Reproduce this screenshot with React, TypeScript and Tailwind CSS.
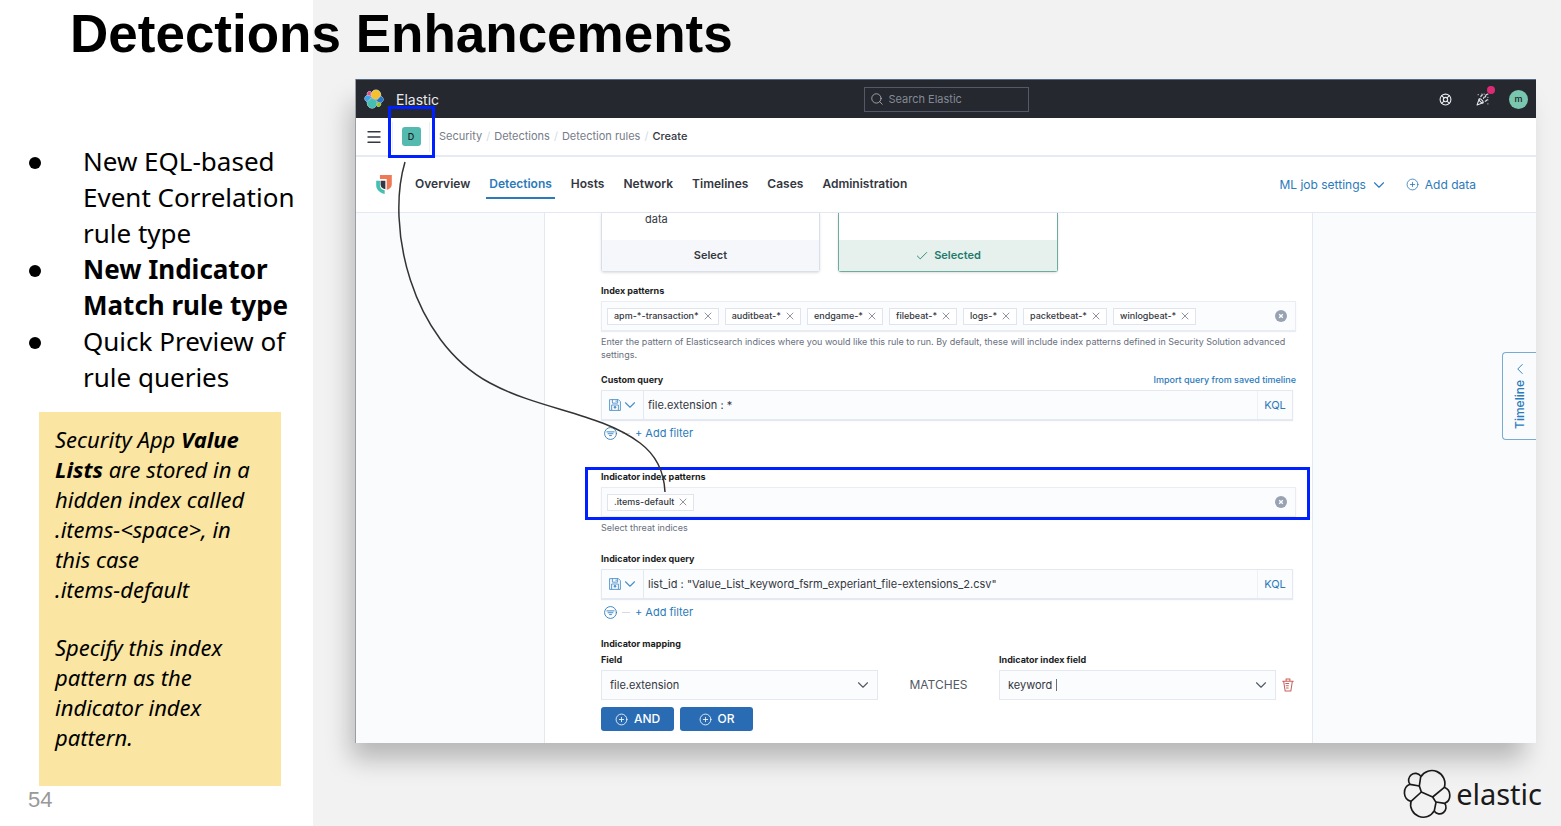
import type { ReactNode } from 'react';
import { Check, ChevronDown, ChevronLeft, CirclePlus, LifeBuoy, Menu, PartyPopper, Search, X } from 'lucide-react';

const indexPatterns = [
  'apm-*-transaction*',
  'auditbeat-*',
  'endgame-*',
  'filebeat-*',
  'logs-*',
  'packetbeat-*',
  'winlogbeat-*',
];

const navItems = ['Overview', 'Detections', 'Hosts', 'Network', 'Timelines', 'Cases', 'Administration'];

const clusterShapes = [
  { fill: '#F5C12E', d: 'M12.58 13.787l7.002 3.211 7.066-6.213a7.849 7.849 0 00.152-1.557c0-4.287-3.464-7.775-7.722-7.775a7.7 7.7 0 00-6.376 3.386l-1.18 6.121 1.058 2.827z' },
  { fill: '#46BFB3', d: 'M5.333 21.215a8.2 8.2 0 00-.15 1.59c0 4.3 3.487 7.812 7.757 7.812 2.57 0 4.975-1.28 6.425-3.42l1.166-6.107-1.556-2.989-7.03-3.22-6.612 6.334z' },
  { fill: '#E8478B', d: 'M5.288 9.067l4.8 1.137L11.14 4.72a3.79 3.79 0 00-6.072 3.025c0 .456.073.906.22 1.322z' },
  { fill: '#3CA5EC', d: 'M4.872 10.214c-2.144.713-3.64 2.78-3.64 5.06 0 2.218 1.36 4.201 3.41 4.99l6.734-6.121-1.236-2.661-5.268-1.268z' },
  { fill: '#93C90E', d: 'M20.873 27.197a3.756 3.756 0 006.07-3.03c0-.455-.073-.905-.22-1.32l-4.795-1.13-1.055 5.48z' },
  { fill: '#2178C9', d: 'M21.848 20.563l5.28 1.242c2.144-.713 3.64-2.78 3.64-5.06a5.378 5.378 0 00-3.41-4.984l-6.904 6.084 1.394 2.718z' },
];

function ElasticCluster() {
  return (
    <svg viewBox="0 0 32 32" className="h-5 w-5" aria-hidden="true">
      {clusterShapes.map((s) => (
        <path key={s.fill} d={s.d} fill="#dfe6ee" stroke="#dfe6ee" strokeWidth="1.2" />
      ))}
      {clusterShapes.map((s) => (
        <path key={s.fill} d={s.d} fill={s.fill} />
      ))}
    </svg>
  );
}

function ElasticOutline() {
  return (
    <svg viewBox="66 88 150 150" className="h-[50px] w-[50px]" fill="none" stroke="#1a1a1a" strokeWidth="5" strokeLinejoin="round" aria-hidden="true">
      <path d="M122 112A39 39 0 0 1 193 143L158 172L124 157L118 139Z" />
      <path d="M122 109A19 19 0 0 0 90 134L118 139" />
      <path d="M90 134A27 27 0 0 0 93 185L124 157" />
      <path d="M93 185A38 38 0 0 0 163 213L168 188L158 172" />
      <path d="M193 143A26 26 0 0 1 194 191L168 187" />
      <path d="M194 191A18 18 0 0 1 163 215" />
    </svg>
  );
}

function SecurityLogo() {
  return (
    <svg viewBox="0 0 46 56" className="h-[19px] w-4" aria-hidden="true">
      <path fill="#EE7A55" d="M11 0H46V27C46 35 41 41 31 44V12H11Z" />
      <path fill="#46BFB3" d="M0 17H11V30C11 38 15 42 25 45V56C10 52 0 43 0 31Z" />
      <path fill="#343741" d="M13 17H27V42C17 40 13 35 13 28Z" />
    </svg>
  );
}

function SaveIcon() {
  return (
    <svg viewBox="0 0 16 16" className="h-3 w-3" fill="none" stroke="currentColor" strokeWidth="1.2" aria-hidden="true">
      <path d="M1.5.8H12.5L15.2 3.5V15.2H.8V.8ZM4.5.8V5.5H11.5V.8M9.5 2V4M3.5 15V8H12.5V15" />
      <circle cx="8" cy="11" r="1.3" fill="currentColor" />
    </svg>
  );
}

function FilterIcon() {
  return (
    <svg viewBox="0 0 16 16" className="h-[13px] w-[13px]" fill="none" stroke="currentColor" strokeWidth="1.1" strokeLinecap="round" aria-hidden="true">
      <circle cx="8" cy="8" r="7.3" />
      <path d="M3.5 6H12.5M5 8.3H11M6.8 10.6H9.2" />
    </svg>
  );
}

function ClearIcon() {
  return (
    <svg viewBox="0 0 12 12" className="h-3 w-3" aria-hidden="true">
      <circle cx="6" cy="6" r="6" fill="#98A2B3" />
      <path d="M4.2 4.2L7.8 7.8M7.8 4.2L4.2 7.8" stroke="#fff" strokeWidth="1.3" />
    </svg>
  );
}

function TrashIcon() {
  return (
    <svg viewBox="0 0 16 18" className="h-[14px] w-3" fill="none" stroke="#C9605A" strokeWidth="1.4" strokeLinecap="round" aria-hidden="true">
      <path d="M1 4H15M5.5 4V1H10.5V4M2.2 4L4.2 17H11.8L13.8 4M5 7H9M5.5 10H8.5M6 13H8.2" />
    </svg>
  );
}

function ComboField({ id, label, items, children }: { id: string; label: string; items: string[]; children?: ReactNode }) {
  return (
    <div className="flex flex-col gap-1">
      <label htmlFor={id} className="text-[9px] leading-[13px] font-bold text-[#1a1c21]">{label}</label>
      <div className="flex h-[30px] items-center gap-[6px] border border-[#e9edf3] bg-[#fbfcfd] pr-2 pl-[5px] shadow-[0_1px_1px_#e9edf3]">
        {items.map((item) => (
          <span key={item} className="flex h-[17px] shrink-0 items-center gap-[3px] border border-[#dfe4ee] bg-white pr-1 pl-[6px] text-[9px] font-medium text-[#343741]">
            {item}
            <button type="button" aria-label={`Remove ${item}`}>
              <X className="h-3 w-3 text-[#69707d]" strokeWidth={1.5} />
            </button>
          </span>
        ))}
        <input id={id} className="min-w-0 flex-1 bg-transparent text-[9px] outline-none" />
        <button type="button" aria-label="Clear all">
          <ClearIcon />
        </button>
      </div>
      {children}
    </div>
  );
}

function QueryField({ id, label, value, action }: { id: string; label: string; value: string; action?: ReactNode }) {
  return (
    <div>
      <div className="flex items-center justify-between">
        <label htmlFor={id} className="text-[9px] leading-[13px] font-bold text-[#1a1c21]">{label}</label>
        {action}
      </div>
      <div className="mt-1 mr-[3px] flex h-[30px] border border-[#e4e8f1] bg-[#fbfcfd] shadow-[0_1px_1px_#e4e8f1]">
        <button type="button" aria-label="Saved queries" className="flex w-[42px] items-center justify-center border-r border-[#e4e8f1] pl-[2px] text-[#4a90c9]">
          <SaveIcon />
          <ChevronDown className="h-[18px] w-[18px]" strokeWidth={1.5} />
        </button>
        <input id={id} defaultValue={value} className="min-w-0 flex-1 bg-transparent px-1 text-[11px] text-[#343741] outline-none" />
        <button type="button" className="w-[35px] border-l border-[#edf0f5] text-[11px] text-[#2b7abb]">KQL</button>
      </div>
      <div className="flex h-[26px] items-center gap-[5px] pl-[3px] text-[#2b7abb]">
        <FilterIcon />
        <span className="h-px w-2 bg-[#d3dae6]" />
        <button type="button" className="text-[11px]">+ Add filter</button>
      </div>
    </div>
  );
}

function SelectField({ id, label, value, caret }: { id: string; label: string; value: string; caret?: boolean }) {
  return (
    <div className="flex flex-1 flex-col gap-1">
      <label htmlFor={id} className="text-[9px] leading-[13px] font-bold text-[#1a1c21]">{label}</label>
      <div className="flex h-[30px] items-center gap-1 border border-[#e4e8f1] bg-[#fbfcfd] pr-[5px] pl-2 text-[11px] text-[#343741]">
        <select id={id} className="appearance-none bg-transparent outline-none [field-sizing:content]">
          <option>{value}</option>
        </select>
        {caret && <span className="h-3 w-px bg-[#69707d]" />}
        <ChevronDown className="ml-auto h-[18px] w-[18px] text-[#535966]" strokeWidth={1.5} />
      </div>
    </div>
  );
}

function AppHeader() {
  return (
    <header>
      <div className="grid h-[39px] grid-cols-[1fr_auto_1fr] items-center border-t border-[#536a86] bg-[#25282f] px-2">
        <div className="flex items-center gap-3 text-[14px] text-[#e8eaee]">
          <ElasticCluster />
          Elastic
        </div>
        <label className="flex h-[25px] w-[165px] items-center gap-[5px] border border-[#535966] px-[5px]">
          <Search className="h-[14px] w-[14px] text-[#a9afbb]" strokeWidth={1.5} />
          <input aria-label="Search Elastic" placeholder="Search Elastic" className="min-w-0 flex-1 bg-transparent text-[11px] outline-none placeholder:text-[#848a95]" />
        </label>
        <div className="flex items-center justify-end gap-6 text-[#e8eaee]">
          <button type="button" aria-label="Help">
            <LifeBuoy className="h-[13px] w-[13px]" />
          </button>
          <button type="button" aria-label="What's new" className="relative">
            <PartyPopper className="h-[13px] w-[13px]" />
            <span className="absolute -top-[7px] -right-[6px] h-2 w-2 rounded-full bg-[#dd2a74]" />
          </button>
          <button type="button" aria-label="Account" className="-ml-1 flex h-[19px] w-[19px] items-center justify-center rounded-full bg-[#79c7ae] text-[9px] font-medium text-[#1a1c21]">
            m
          </button>
        </div>
      </div>
      <div className="flex h-[39px] items-center border-b-2 border-[#e6eaf2] pl-[9px]">
        <button type="button" aria-label="Toggle menu">
          <Menu className="h-[18px] w-[18px] text-[#343741]" strokeWidth={1.75} />
        </button>
        <div className="relative mx-[9px] flex h-[30px] w-[38px] items-center justify-center border-x border-[#eceff5]">
          <button type="button" className="h-[19px] w-[19px] rounded-[3px] bg-[#54b9ae] text-[9px] font-medium text-[#1a1c21]">D</button>
          <div className="absolute -top-[16px] -right-[6px] -bottom-[6px] -left-[5px] border-3 border-[#0021ff]" />
        </div>
        <nav aria-label="Breadcrumb" className="flex items-center gap-1 text-[11px] text-[#767c89]">
          {['Security', 'Detections', 'Detection rules'].map((crumb) => (
            <span key={crumb} className="flex gap-1">
              <a href="#">{crumb}</a>
              <span className="text-[#d3dae6]">/</span>
            </span>
          ))}
          <span className="font-medium text-[#343741]">Create</span>
        </nav>
      </div>
      <div className="flex h-14 items-center border-b border-[#e3e8f1] pr-[60px] pl-5 text-[12px]">
        <SecurityLogo />
        <nav className="ml-5 flex gap-[13px] font-semibold text-[#343741]">
          {navItems.map((item) =>
            item === 'Detections' ? (
              <a key={item} href="#" aria-current="page" className="border-b-2 border-[#2b7abb] px-[3px] py-1 text-[#2b7abb]">{item}</a>
            ) : (
              <a key={item} href="#" className="border-b-2 border-transparent px-[3px] py-1">{item}</a>
            )
          )}
        </nav>
        <div className="ml-auto flex items-center gap-[18px] text-[#2b7abb]">
          <button type="button" className="flex items-center gap-1">
            ML job settings
            <ChevronDown className="h-[18px] w-[18px]" strokeWidth={1.5} />
          </button>
          <button type="button" className="flex items-center gap-[6px]">
            <CirclePlus className="h-[13px] w-[13px]" strokeWidth={1.5} />
            Add data
          </button>
        </div>
      </div>
    </header>
  );
}

function RuleForm() {
  return (
    <form className="min-w-0 flex-1 border-x border-[#e3e8f1] bg-white pr-4 pb-3 pl-14">
      <div className="flex gap-[18px] text-[11px]">
        <div className="w-[219px] rounded-b-[3px] border border-t-0 border-[#d9dfea] text-[#343741] shadow-sm">
          <p className="h-[27px] pl-[43px] leading-[13px]">data</p>
          <button type="button" className="h-[31px] w-full bg-[#f5f7fa] font-semibold">Select</button>
        </div>
        <div className="w-[220px] rounded-b-[3px] border border-t-0 border-[#6dab9f] pt-[27px] shadow-sm">
          <button type="button" className="flex h-[31px] w-full items-center justify-center gap-[5px] bg-[#e6f1ee] font-semibold text-[#1f7a6c]">
            <Check className="h-[14px] w-[14px]" strokeWidth={1.5} />
            Selected
          </button>
        </div>
      </div>

      <div className="mt-3">
        <ComboField id="index-patterns" label="Index patterns" items={indexPatterns}>
          <p className="text-[9px] leading-[13px] text-[#69707d]">
            Enter the pattern of Elasticsearch indices where you would like this rule to run. By default, these will include index patterns defined in Security Solution advanced settings.
          </p>
        </ComboField>
      </div>

      <div className="mt-3">
        <QueryField
          id="custom-query"
          label="Custom query"
          value="file.extension : *"
          action={<a href="#" className="text-[9px] leading-[13px] font-medium text-[#2b7abb]">Import query from saved timeline</a>}
        />
      </div>

      <div className="relative mt-6">
        <ComboField id="indicator-patterns" label="Indicator index patterns" items={['.items-default']}>
          <p className="text-[9px] leading-[13px] text-[#69707d]">Select threat indices</p>
        </ComboField>
        <div className="pointer-events-none absolute -top-[3px] -right-[14px] -left-4 h-[53px] border-3 border-[#0021ff]" />
      </div>

      <div className="mt-[18px]">
        <QueryField id="indicator-query" label="Indicator index query" value={'list_id : "Value_List_keyword_fsrm_experiant_file-extensions_2.csv"'} />
      </div>

      <fieldset className="mt-3">
        <legend className="text-[9px] leading-[13px] font-bold text-[#1a1c21]">Indicator mapping</legend>
        <div className="mt-[3px] flex items-end">
          <SelectField id="field" label="Field" value="file.extension" />
          <span className="w-[121px] pb-[7px] text-center text-[12px] leading-4 text-[#535966]">MATCHES</span>
          <SelectField id="indicator-field" label="Indicator index field" value="keyword" caret />
          <button type="button" aria-label="Delete mapping" className="flex h-[30px] w-5 items-center justify-end pr-[2px]">
            <TrashIcon />
          </button>
        </div>
        <div className="mt-[7px] flex gap-[6px] text-[12px] font-medium text-white">
          {['AND', 'OR'].map((op) => (
            <button key={op} type="button" className="flex h-6 w-[73px] items-center justify-center gap-[6px] rounded-[3px] bg-[#2a6cb3]">
              <CirclePlus className="h-[13px] w-[13px]" strokeWidth={1.5} />
              {op}
            </button>
          ))}
        </div>
      </fieldset>
    </form>
  );
}

export default function App() {
  return (
    <div className="flex min-h-screen bg-[#f2f2f2] text-black">
      <aside className="flex w-[313px] shrink-0 flex-col bg-white font-['Noto_Sans',sans-serif]">
        <h1 className="relative z-10 pt-1 pl-[70px] font-['Liberation_Sans',sans-serif] text-[53px] leading-[60px] font-bold whitespace-nowrap">
          Detections Enhancements
        </h1>
        <ul className="mt-[79px] pr-3 pl-[29px] text-[26px] leading-9">
          {['New EQL-based Event Correlation rule type', 'New Indicator Match rule type', 'Quick Preview of rule queries'].map((point, i) => (
            <li key={point} className="flex gap-[42px]">
              <span className="mt-[14px] h-3 w-3 shrink-0 rounded-full bg-black" />
              {i === 1 ? <strong>{point}</strong> : <span>{point}</span>}
            </li>
          ))}
        </ul>
        <div className="mt-[17px] mr-8 ml-[39px] flex flex-col gap-7 bg-[#fae5a2] px-4 pt-3 pb-[34px] text-[22px] leading-[30px] italic">
          <p>
            Security App <strong>Value Lists</strong> are stored in a hidden index called .items-&lt;space&gt;, in this case <span className="whitespace-nowrap">.items-default</span>
          </p>
          <p>Specify this index pattern as the indicator index pattern.</p>
        </div>
        <p className="pl-7 font-['Liberation_Sans',sans-serif] text-[22px] leading-7 text-[#999]">54</p>
      </aside>

      <main className="flex min-w-0 flex-1 flex-col pt-[79px] pr-[25px] pl-[42px]">
        <section className="relative border-l border-[#9a9da3] bg-white font-['Inter',sans-serif] shadow-[-8px_20px_24px_-4px_rgba(0,0,0,0.25)]">
          <AppHeader />
          <div className="flex bg-[#fafbfd]">
            <div className="w-[188px] shrink-0" />
            <RuleForm />
            <div className="flex w-[223px] shrink-0 items-start justify-end pt-[139px]">
              <button type="button" className="flex h-[88px] w-[34px] flex-col items-center justify-center gap-[2px] rounded-l-[4px] border border-r-0 border-[#79aad3] pb-1 text-[12px] font-medium text-[#2b7abb]">
                <ChevronLeft className="h-[18px] w-[18px]" strokeWidth={1.25} />
                <span className="rotate-180 [writing-mode:vertical-rl]">Timeline</span>
              </button>
            </div>
          </div>
          {/* connector from the space badge to the indicator index pattern */}
          <svg viewBox="356 79 320 420" className="pointer-events-none absolute top-0 left-0 h-[420px] w-[320px]" fill="none" stroke="#333" strokeWidth="1.5" aria-hidden="true">
            <path d="M405 162C386 225 410 340 490 383C540 410 600 413 640 443C656 455 664 470 665 492" />
          </svg>
        </section>
        <footer className="mt-[26px] -mr-[6px] flex items-center justify-end gap-1 font-['Noto_Sans',sans-serif] text-[29px] leading-[50px] text-[#1a1a1a]">
          <ElasticOutline />
          elastic
        </footer>
      </main>
    </div>
  );
}
